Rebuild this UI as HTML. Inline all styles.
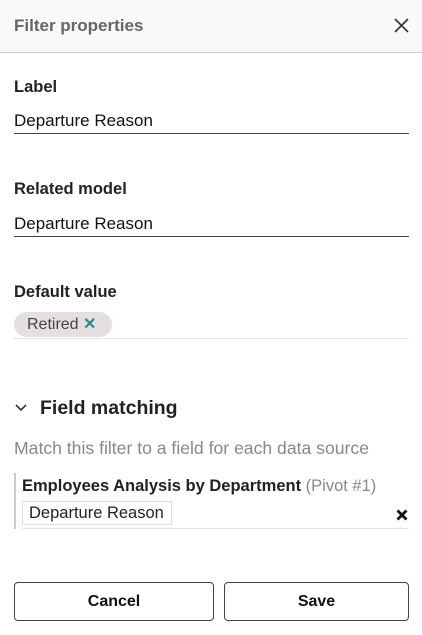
<!DOCTYPE html>
<html><head><style>
*{box-sizing:border-box;margin:0;padding:0}
body{width:422px;height:635px;background:#fff;font-family:"Liberation Sans",sans-serif;color:#222;position:relative;overflow:hidden}
.a{position:absolute;white-space:nowrap}
.h{left:0;top:0;width:422px;height:53px;background:#f8f9fa;border-bottom:1px solid #ccc}
.lbl{font-weight:bold;font-size:16.5px;color:#222}
.val{font-size:17px;color:#111}
.line{height:1px;background:#444;left:14px;width:395px}
.btn{border:1px solid #444;border-radius:4px;height:39px;top:582px;font-size:16px;font-weight:bold;text-align:center;line-height:37px;color:#111}
</style></head><body>
<div class="a h"></div>
<div class="a" style="left:14px;top:16px;font-size:17px;font-weight:bold;color:#666">Filter properties</div>
<svg class="a" style="left:394px;top:18px" width="15" height="15" viewBox="0 0 15 15"><path d="M1 1L14 14M14 1L1 14" stroke="#333" stroke-width="1.6"/></svg>

<div class="a lbl" style="left:14px;top:78px">Label</div>
<div class="a val" style="left:14px;top:111px">Departure Reason</div>
<div class="a line" style="top:133px"></div>

<div class="a lbl" style="left:14px;top:180px">Related model</div>
<div class="a val" style="left:14px;top:214px">Departure Reason</div>
<div class="a line" style="top:236px"></div>

<div class="a lbl" style="left:14px;top:283px">Default value</div>
<div class="a" style="left:14px;top:312px;width:98px;height:25px;border-radius:13px;background:#e6dfdf;font-size:16px;color:#444;padding-left:13px;line-height:25px">Retired <span style="color:#2a8a8a;font-weight:bold">✕</span></div>
<div class="a" style="left:14px;top:338px;width:395px;height:1px;background:#e4e4e4"></div>

<svg class="a" style="left:15px;top:403px" width="12" height="9" viewBox="0 0 12 9"><path d="M1 2L6 7L11 2" stroke="#333" stroke-width="1.6" fill="none"/></svg>
<div class="a" style="left:40px;top:397px;font-size:19.5px;font-weight:bold;color:#222">Field matching</div>
<div class="a" style="left:14px;top:438px;font-size:17.6px;color:#888">Match this filter to a field for each data source</div>

<div class="a" style="left:14px;top:473px;width:2px;height:56px;background:#ccc"></div>
<div class="a" style="left:22px;top:477px;font-size:16.5px;font-weight:bold;color:#222">Employees Analysis by Department <span style="font-weight:normal;color:#888">(Pivot #1)</span></div>
<div class="a" style="left:22px;top:501px;width:150px;height:24px;border:1px solid #ddd;font-size:16.5px;color:#222;padding-left:6px;line-height:22px">Departure Reason</div>
<div class="a" style="left:22px;top:528px;width:387px;height:1px;background:#e4e4e4"></div>
<svg class="a" style="left:396px;top:509px" width="12" height="12" viewBox="0 0 12 12"><path d="M1.5 1.5L10.5 10.5M10.5 1.5L1.5 10.5" stroke="#111" stroke-width="2.8"/></svg>

<div class="a btn" style="left:14px;width:200px">Cancel</div>
<div class="a btn" style="left:224px;width:185px">Save</div>
</body></html>
